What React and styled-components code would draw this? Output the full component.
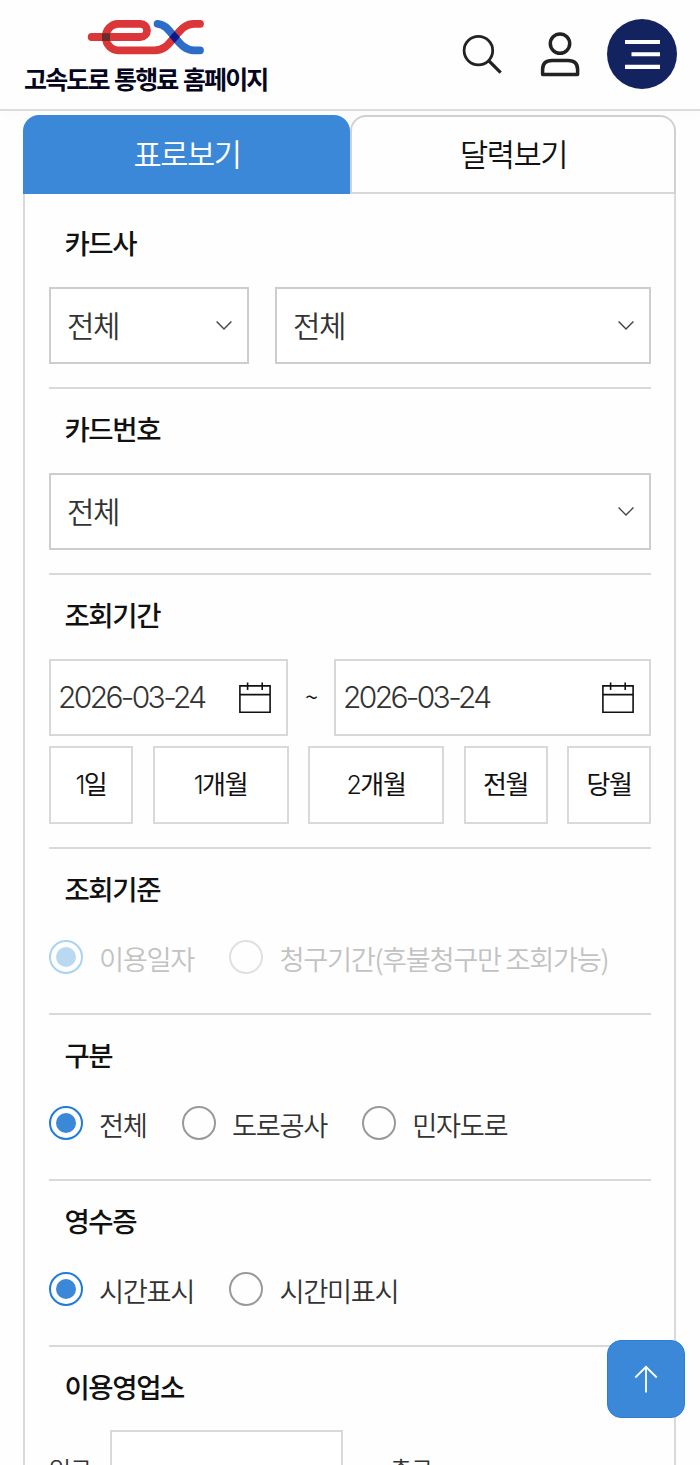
import React, { useState } from 'react';
import styled, { createGlobalStyle } from 'styled-components';

const GlobalStyle = createGlobalStyle`
  *, *::before, *::after { box-sizing: border-box; letter-spacing: -0.05em; }
  body {
    margin: 0;
    background: #fefefe;
    color: #111;
    font-family: "Noto Sans CJK KR", sans-serif;
  }
  button, input { font: inherit; color: inherit; }
`;

const Page = styled.div`
  width: 700px;
  height: 1465px;
  overflow: hidden;
  position: relative;
`;

const Header = styled.header`
  height: 111px;
  border-bottom: 2px solid #dcdcdc;
  box-shadow: 0 3px 12px rgba(0, 0, 0, 0.02);
  display: flex;
  justify-content: space-between;
  padding: 18px 23px 0 24px;
`;

const Brand = styled.a`
  width: 250px;
  display: flex;
  flex-direction: column;

  svg { display: block; margin-left: 63px; }
`;

const BrandName = styled.span`
  margin-top: 4px;
  font-size: 25px;
  line-height: 36px;
  font-weight: 700;
  letter-spacing: -1.85px;
  word-spacing: 1.6px;
  color: #06061f;
  white-space: nowrap;
`;

const HeaderTools = styled.div`
  display: flex;
  align-items: flex-start;
`;

const ToolButton = styled.button`
  border: 0;
  padding: 0;
  background: none;
  width: 42px;
  height: 48px;
  margin: 13px ${(p) => p.$after}px 0 0;
  svg { display: block; }
`;

const MenuButton = styled.button`
  width: 70px;
  height: 70px;
  margin-top: 1px;
  padding: 0;
  border: 0;
  border-radius: 50%;
  background: #13235f;
  svg { display: block; }
`;

const Main = styled.main`
  margin: 4px 24px 0 23px;
`;

const Tabs = styled.div`
  display: flex;
  height: 79px;
`;

const Tab = styled.button`
  flex: ${(p) => (p.$active ? '0 0 327px' : '1')};
  padding: 0 0 4px 1px;
  border: 2px solid ${(p) => (p.$active ? '#3b88d9' : '#d0d0d3')};
  border-bottom-color: ${(p) => (p.$active ? '#3b88d9' : '#d8d8d8')};
  border-radius: 16px 16px 0 0;
  background: ${(p) => (p.$active ? '#3b88d9' : '#fefefe')};
  color: ${(p) => (p.$active ? '#fff' : '#111')};
  font-size: 30.7px;
  font-weight: 350;
`;

const Panel = styled.form`
  border: 2px solid #dadadc;
  border-width: 0 2px;
  padding: 9px 23px 0 24px;
  height: 1300px;
`;

const Section = styled.section`
  border-bottom: 2px solid #d9d9d9;
  padding-bottom: 23px;
`;

const Title = styled.h2`
  margin: 0;
  height: 84px;
  padding: 19px 0 0 15.4px;
  font-size: 27.5px;
  line-height: 40px;
  font-weight: 500;
`;

const Row = styled.div`
  display: flex;
  align-items: center;
  gap: ${(p) => p.$gap ?? 0}px;
`;

const Select = styled.button`
  width: ${(p) => p.$width ?? 602}px;
  height: 77px;
  padding: 0 14px 0 16px;
  border: 2px solid #cdcdcd;
  background: #fff;
  display: flex;
  align-items: center;
  justify-content: space-between;
  font-size: 29.8px;
  font-weight: 350;
  color: #333;
`;

const SelectText = styled.span`
  padding-bottom: 4px;
`;

const DateBox = styled.div`
  width: ${(p) => p.$width}px;
  height: 77px;
  padding: 0 15px 0 7px;
  border: 2px solid #d8d8d8;
  display: flex;
  align-items: center;
  justify-content: space-between;
  background: #fff;
`;

const DateValue = styled.span`
  padding-bottom: 1px;
  font-family: Inter, "Noto Sans CJK KR", sans-serif;
  font-size: 30px;
  font-weight: 300;
  letter-spacing: -2.65px;
  color: #333;
`;

const Tilde = styled.span`
  width: 46px;
  padding-bottom: 4px;
  text-align: center;
  font-size: 24px;
  font-weight: 350;
`;

const Presets = styled(Row)`
  margin-top: 10px;
  justify-content: space-between;
`;

const Preset = styled.button`
  width: ${(p) => (p.$wide ? 136 : 84)}px;
  height: 78px;
  padding: 0 0 6px;
  border: 2px solid #d9d9d9;
  background: #fff;
  font-size: 26px;
  font-weight: 400;
`;

const PresetNumber = styled.span`
  font-family: Inter, "Noto Sans CJK KR", sans-serif;
  font-size: 25px;
  font-weight: 300;
  letter-spacing: -1.5px;
`;

const Radios = styled.div`
  display: flex;
  padding-top: 7px;
  height: 57px;
  gap: 35.4px;
`;

const RadioLabel = styled.label`
  display: flex;
  gap: 16px;
  height: 34px;
  font-size: 27.3px;
  line-height: 37px;
  font-weight: 350;
  color: ${(p) => (p.$disabled ? '#c2c2c2' : '#333')};
  white-space: nowrap;
`;

const ringColor = (p) => {
  if (p.$disabled) return p.$on ? '#a9d3f3' : '#e0e0e0';
  return p.$on ? '#1f7bdc' : '#999';
};

const dotColor = (p) => {
  if (!p.$on) return 'transparent';
  return p.$disabled ? '#b9d9f3' : '#3b88d9';
};

const RadioMark = styled.span`
  width: 34px;
  height: 34px;
  border: 2px solid ${ringColor};
  border-radius: 50%;
  display: grid;
  place-items: center;

  &::after {
    content: "";
    width: 20px;
    height: 20px;
    border-radius: 50%;
    background: ${dotColor};
  }
`;

const OfficeRow = styled.div`
  display: flex;
  font-size: 24px;
  line-height: 76px;
  font-weight: 350;
  color: #333;
`;

const OfficeLabel = styled.span`
  width: ${(p) => p.$width}px;
`;

const OfficeInput = styled.input`
  width: 233px;
  height: 78px;
  margin: -1px 47px 0 0;
  border: 2px solid #d9d9d9;
  background: #fff;
`;

const TopButton = styled.button`
  position: absolute;
  left: 606.6px;
  top: 1340.4px;
  width: 78px;
  height: 78px;
  border: 1px solid #2d7dd5;
  border-radius: 14px;
  padding: 0;
  background: #3b88d9;
  display: grid;
  place-items: center;
`;

const Logo = () => (
  <svg width="120" height="38" viewBox="87 18 120 38" fill="none" strokeWidth="7.8" strokeLinecap="round">
    <path
      d="M91.7 37H140.4a6.6 6.6 0 0 0 0-13.2H118a12.2 13.25 0 0 0 0 26.5H154.5C165 50.3 169 43.5 174.5 37S185 23.8 194 23.8H200"
      stroke="#db3638"
    />
    <path d="M157.6 23.8C165 24.2 169 30.5 174.5 37S185 50.3 194 50.3H200" stroke="#2d6dc8" />
    <path d="M102 33.2h8v7.8h-8z" fill="#6c2b2b" stroke="none" />
    <path d="M174.6 31.2L179.7 37L174.6 42.9L169.5 37z" fill="#141686" stroke="none" />
  </svg>
);

const SearchIcon = () => (
  <svg width="42" height="48" viewBox="461 31 42 48" fill="none" stroke="#222" strokeWidth="2.8">
    <circle cx="478.4" cy="50.6" r="14.3" />
    <path d="M488.5 60.5L500.7 72.6" strokeWidth="3.2" />
  </svg>
);

const UserIcon = () => (
  <svg width="42" height="48" viewBox="539 31 42 48" fill="none" stroke="#222" strokeWidth="3.5">
    <circle cx="560" cy="43.6" r="9.7" />
    <path d="M542.6 74.5V69.5Q542.6 60.4 552 60.4H568Q577.6 60.4 577.6 69.5V74.5Z" strokeLinejoin="round" />
  </svg>
);

const MenuIcon = () => (
  <svg width="70" height="70" viewBox="607 19 70 70" fill="#fff">
    <path d="M625 40h35v4h-35zM631.5 52.2h28.5v4h-28.5zM625 64.7h35v4.2h-35z" />
  </svg>
);

const Chevron = () => (
  <svg width="18" height="12" viewBox="0 0 18 12" fill="none" stroke="#444" strokeWidth="1.4">
    <path d="M1.6 1.6L9 9L16.4 1.6" />
  </svg>
);

const CalendarIcon = () => (
  <svg width="32" height="32" viewBox="0 0 32 32" fill="none" stroke="#111" strokeWidth="1.6">
    <path d="M.9 3.9h30.2v26.3H.9zM.9 12.6h30.2M8.6 .4v7.6M23.2 .4v7.6" />
  </svg>
);

const UpArrow = () => (
  <svg width="26" height="30" viewBox="0 0 26 30" fill="none" stroke="#fff" strokeWidth="1.8">
    <path d="M13 28.5V2.5M2.3 13.5L13 2.8L23.7 13.5" />
  </svg>
);

function Radio({ label, on, disabled, onSelect }) {
  return (
    <RadioLabel $disabled={disabled} onClick={disabled ? undefined : onSelect}>
      <RadioMark $on={on} $disabled={disabled} />
      {label}
    </RadioLabel>
  );
}

function RadioGroup({ options, disabled }) {
  const [selected, setSelected] = useState(0);
  return (
    <Radios>
      {options.map((label, i) => (
        <Radio key={label} label={label} on={i === selected} disabled={disabled} onSelect={() => setSelected(i)} />
      ))}
    </Radios>
  );
}

const presets = [
  { number: '1', unit: '일' },
  { number: '1', unit: '개월', wide: true },
  { number: '2', unit: '개월', wide: true },
  { unit: '전월' },
  { unit: '당월' },
];

export default function App() {
  const [tab, setTab] = useState(0);
  return (
    <Page>
      <GlobalStyle />
      <Header>
        <Brand>
          <Logo />
          <BrandName>고속도로 통행료 홈페이지</BrandName>
        </Brand>
        <HeaderTools>
          <ToolButton $after={36} aria-label="검색"><SearchIcon /></ToolButton>
          <ToolButton $after={26} aria-label="내 정보"><UserIcon /></ToolButton>
          <MenuButton aria-label="메뉴"><MenuIcon /></MenuButton>
        </HeaderTools>
      </Header>
      <Main>
        <Tabs>
          <Tab $active={tab === 0} onClick={() => setTab(0)}>표로보기</Tab>
          <Tab $active={tab === 1} onClick={() => setTab(1)}>달력보기</Tab>
        </Tabs>
        <Panel>
          <Section>
            <Title>카드사</Title>
            <Row $gap={26}>
              <Select type="button" $width={200}><SelectText>전체</SelectText><Chevron /></Select>
              <Select type="button" $width={376}><SelectText>전체</SelectText><Chevron /></Select>
            </Row>
          </Section>
          <Section>
            <Title>카드번호</Title>
            <Select type="button"><SelectText>전체</SelectText><Chevron /></Select>
          </Section>
          <Section>
            <Title>조회기간</Title>
            <Row>
              <DateBox $width={239}><DateValue>2026-03-24</DateValue><CalendarIcon /></DateBox>
              <Tilde>~</Tilde>
              <DateBox $width={317}><DateValue>2026-03-24</DateValue><CalendarIcon /></DateBox>
            </Row>
            <Presets>
              {presets.map(({ number, unit, wide }) => (
                <Preset type="button" key={`${number}${unit}`} $wide={wide}>
                  {number && <PresetNumber>{number}</PresetNumber>}
                  {unit}
                </Preset>
              ))}
            </Presets>
          </Section>
          <Section>
            <Title>조회기준</Title>
            <RadioGroup disabled options={['이용일자', '청구기간(후불청구만 조회가능)']} />
          </Section>
          <Section>
            <Title>구분</Title>
            <RadioGroup options={['전체', '도로공사', '민자도로']} />
          </Section>
          <Section>
            <Title>영수증</Title>
            <RadioGroup options={['시간표시', '시간미표시']} />
          </Section>
          <Section>
            <Title>이용영업소</Title>
            <OfficeRow>
              <OfficeLabel $width={61}>입구</OfficeLabel>
              <OfficeInput />
              <OfficeLabel $width={61}>출구</OfficeLabel>
            </OfficeRow>
          </Section>
        </Panel>
      </Main>
      <TopButton aria-label="맨 위로"><UpArrow /></TopButton>
    </Page>
  );
}
